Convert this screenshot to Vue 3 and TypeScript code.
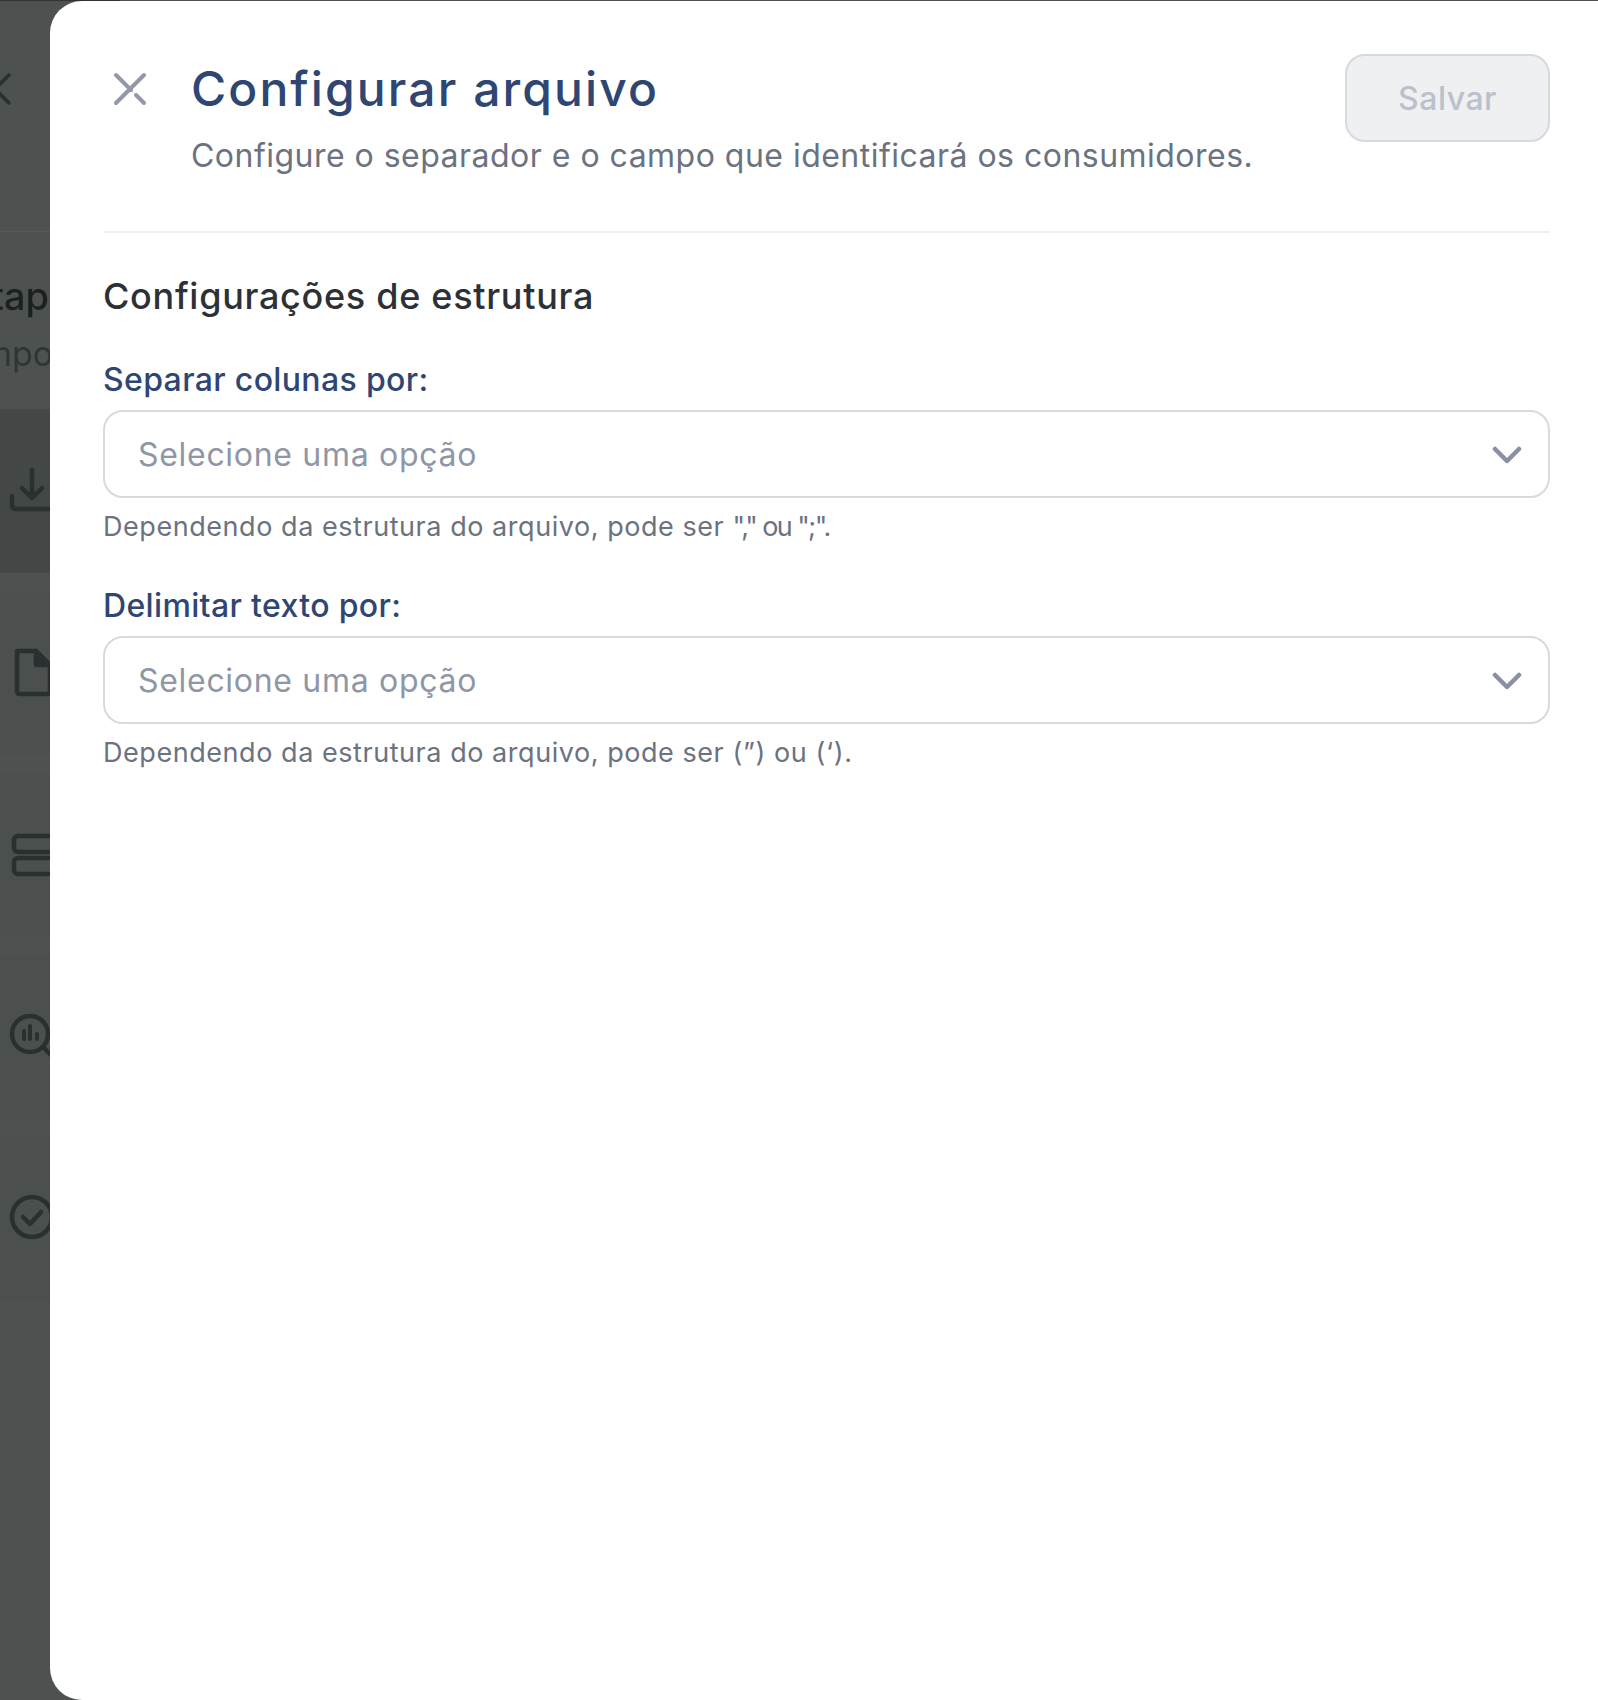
<script setup lang="ts">
interface Field {
  label: string
  hint: string
  tail: string
  tailClass: string
}

const fields: Field[] = [
  {
    label: 'Separar colunas por:',
    hint: 'Dependendo da estrutura do arquivo, pode ser ',
    tail: '"," ou ";".',
    tailClass: 'tail-tight',
  },
  {
    label: 'Delimitar texto por:',
    hint: 'Dependendo da estrutura do arquivo, pode ser ',
    tail: '(”) ou (‘).',
    tailClass: 'tail-wide',
  },
]
</script>

<template>
  <div class="page">
    <div class="behind">
      <div class="behind-top">
        <svg class="back" width="20" height="40" viewBox="0 0 20 40" fill="none">
          <path d="M9 6 L-5 20 L9 34" stroke="#2a2f30" stroke-width="3.5" stroke-linecap="round" />
        </svg>
      </div>
      <div class="behind-heading">
        <div class="behind-title">Etapas</div>
        <div class="behind-sub">Importar</div>
      </div>
      <div class="step step-active">
        <svg width="60" height="60" viewBox="0 0 60 60" fill="none" stroke="#2a2f30" stroke-width="4.5" stroke-linecap="round" stroke-linejoin="round">
          <path d="M32 9 V37 M22 27 L32 37 L42 27" />
          <path d="M12 35 V44 Q12 48 16 48 H52" />
        </svg>
      </div>
      <div class="step">
        <svg width="60" height="60" viewBox="0 0 60 60" fill="none" stroke="#2a2f30" stroke-width="4.5" stroke-linejoin="round">
          <path d="M17 8 H36 L50 22 V48 Q50 51 47 51 H20 Q17 51 17 48 Z" />
          <path d="M36 8 V22 H50 Z" fill="#2a2f30" />
        </svg>
      </div>
      <div class="step">
        <svg width="60" height="60" viewBox="0 0 60 60" fill="none" stroke="#2a2f30" stroke-width="4.5">
          <rect x="14" y="11" width="46" height="16" rx="4" />
          <rect x="14" y="33" width="46" height="16" rx="4" />
        </svg>
      </div>
      <div class="step">
        <svg width="60" height="60" viewBox="0 0 60 60" fill="none" stroke="#2a2f30" stroke-width="4.5" stroke-linecap="round">
          <circle cx="30" cy="27" r="18" />
          <path d="M44 41 L56 53" />
          <path d="M24 24 V32 M30 19 V32 M37 27 V32" stroke-width="4" />
        </svg>
      </div>
      <div class="step">
        <svg width="60" height="60" viewBox="0 0 60 60" fill="none" stroke="#2a2f30" stroke-width="4.5" stroke-linecap="round" stroke-linejoin="round">
          <circle cx="32" cy="28" r="20" />
          <path d="M23 28 L30 35 L41 23" />
        </svg>
      </div>
    </div>

    <aside class="drawer">
      <header class="drawer-head">
        <svg class="close" width="36" height="36" viewBox="0 0 36 36" fill="none" stroke="#9298a8" stroke-width="4" stroke-linecap="round">
          <path d="M32 4 L4 32 M4 4 L19 19 M24 24 L32 32" />
        </svg>
        <div class="titles">
          <h1>Configurar arquivo</h1>
          <p>Configure o separador e o campo que identificará os consumidores.</p>
        </div>
        <button class="save" disabled>Salvar</button>
      </header>

      <section class="body">
        <h2>Configurações de estrutura</h2>
        <div v-for="f in fields" :key="f.label" class="field">
          <label>{{ f.label }}</label>
          <div class="select">
            <span>Selecione uma opção</span>
            <svg width="30" height="20" viewBox="0 0 30 20" fill="none" stroke="#8a90a2" stroke-width="4.5" stroke-linecap="round" stroke-linejoin="round">
              <path d="M3 5 L15 17 L27 5" />
            </svg>
          </div>
          <small>{{ f.hint }}<span :class="f.tailClass">{{ f.tail }}</span></small>
        </div>
      </section>
    </aside>
  </div>
</template>

<style>
html, body { margin: 0; background: #4d5250; }
</style>

<style scoped>
.page {
  position: relative;
  width: 1598px;
  height: 1700px;
  overflow: hidden;
  background: #4d5250;
  font-family: Inter, "Liberation Sans", sans-serif;
}
.behind {
  display: flex;
  flex-direction: column;
  width: 120px;
  height: 100%;
  filter: blur(0.6px);
}
.behind-top {
  box-sizing: border-box;
  height: 232px;
  padding-top: 68px;
  border-top: 1px solid #333;
  border-bottom: 1px solid #565b58;
}
.back { display: block; }
.behind-heading {
  height: 177px;
  padding-top: 36px;
  box-sizing: border-box;
  white-space: nowrap;
  color: #1c2021;
}
.behind-title {
  margin-left: -32px;
  font-size: 38px;
  font-weight: 500;
  line-height: 56px;
}
.behind-sub {
  margin-left: -27px;
  margin-top: 4px;
  font-size: 34px;
  line-height: 52px;
  color: #2f3435;
}
.step {
  display: flex;
  align-items: center;
  height: 164px;
  margin-bottom: 18px;
  background: #4b504e;
}
.step-active { background: #434846; }

.drawer {
  position: absolute;
  top: 1px;
  left: 50px;
  right: 0;
  bottom: 0;
  box-sizing: border-box;
  padding: 53px 48px 0 53px;
  background: #fff;
  border-radius: 32px 0 0 32px;
}
.drawer-head {
  display: flex;
  align-items: flex-start;
  height: 177px;
  border-bottom: 2px solid #f0f0f2;
}
.close {
  flex: none;
  margin: 17px 0 0 9px;
}
.titles {
  flex: 1;
  margin-left: 43px;
}
h1 {
  margin: 0;
  font-size: 48px;
  line-height: 70px;
  font-weight: 500;
  letter-spacing: 2.1px;
  color: #2f4672;
}
.titles p {
  margin: 8px 0 0;
  font-size: 32px;
  line-height: 48px;
  letter-spacing: 0.48px;
  color: #6b7280;
}
.save {
  flex: none;
  width: 205px;
  height: 88px;
  box-sizing: border-box;
  background: #eef0f2;
  border: 2px solid #d6d9de;
  border-radius: 20px;
  color: #bcc0cc;
  font: 500 32px Inter, "Liberation Sans", sans-serif;
  letter-spacing: 0.5px;
}
.body { padding-top: 34px; }
h2 {
  margin: 0 0 31px;
  font-size: 36px;
  line-height: 58px;
  font-weight: 500;
  letter-spacing: 0.7px;
  color: #2d3136;
}
.field { margin-bottom: 34px; }
label {
  display: block;
  margin-bottom: 6px;
  font-size: 32px;
  line-height: 48px;
  font-weight: 500;
  letter-spacing: 0.35px;
  color: #2f4672;
}
.select {
  display: flex;
  align-items: center;
  justify-content: space-between;
  box-sizing: border-box;
  height: 88px;
  padding: 0 26px 0 33px;
  border: 2.5px solid #d8dae0;
  border-radius: 20px;
  font-size: 32px;
  letter-spacing: 0.7px;
  color: #9096a6;
}
small {
  display: block;
  margin-top: 8px;
  font-size: 27px;
  line-height: 42px;
  letter-spacing: 0.55px;
  color: #6b7280;
}
.tail-tight { letter-spacing: -1.6px; }
.tail-wide { letter-spacing: 0.6px; }
</style>
